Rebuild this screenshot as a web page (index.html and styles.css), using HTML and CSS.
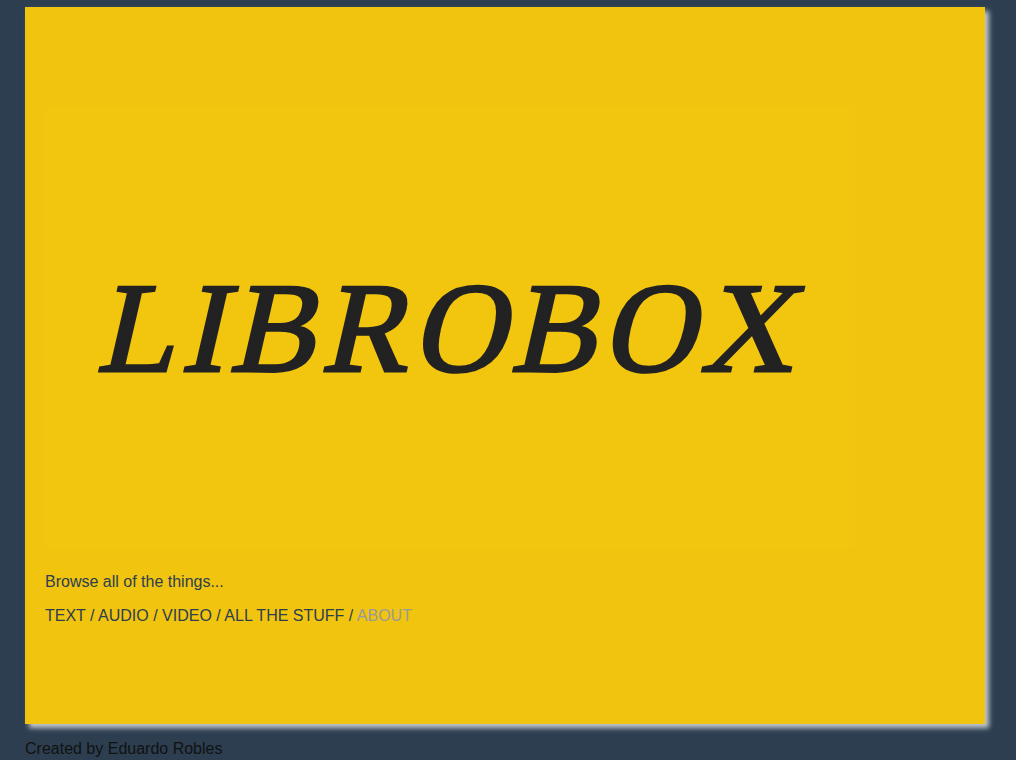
FILE: index.html
```html
<!DOCTYPE html>
<html>
<head>
<meta charset="utf-8">
<title>Librobox</title>
<link rel="stylesheet" href="styles.css">
</head>
<body>
<div class="page">
  <div class="card">
    <div class="hero">
      <h1 class="logo">LIBROBOX</h1>
    </div>
    <p class="intro">Browse all of the things...</p>
    <nav class="nav">
      <a class="link">TEXT</a> / <a class="link">AUDIO</a> / <a class="link">VIDEO</a> / <a class="link">ALL THE STUFF</a> / <a class="link muted">ABOUT</a>
    </nav>
  </div>
  <footer class="footer">Created by Eduardo Robles</footer>
</div>
</body>
</html>
```
FILE: styles.css
```css
html, body {
  margin: 0;
  padding: 0;
  background: #2c3e50;
  font-family: "Liberation Sans", Arial, sans-serif;
  font-size: 16px;
}
.page {
  padding: 7px 0 0 25px;
}
.card {
  box-sizing: border-box;
  width: 960px;
  height: 717px;
  background: #f1c40f;
  box-shadow: 4px 4px 5px #c4c9ce;
  padding: 100px 0 0 18px;
  color: #2c3e50;
}
.hero {
  width: 812px;
  height: 441px;
  background: #f2c50e;
  display: flex;
  align-items: center;
  justify-content: center;
}
.logo {
  margin: 0;
  padding: 2px 0 0 16px;
  font-family: "Liberation Serif", "Times New Roman", serif;
  font-style: normal;
  font-weight: normal;
  font-size: 128px;
  color: #222222;
  -webkit-text-stroke: 3px #222222;
  letter-spacing: 6px;
  transform: skewX(-13deg);
}
.intro {
  margin: 25px 0 0 2px;
  line-height: 18px;
}
.nav {
  margin: 16px 0 0 2px;
  line-height: 18px;
}
.link {
  color: #2c3e50;
}
.muted {
  color: #9a9a9a;
}
.footer {
  margin-top: 16px;
  color: #111;
  line-height: 18px;
}
```
